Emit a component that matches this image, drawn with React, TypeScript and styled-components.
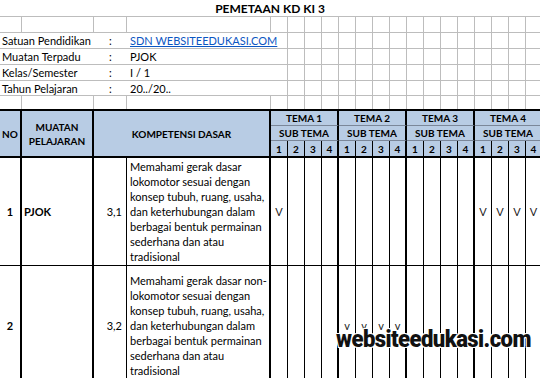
import React from 'react';
import styled, { createGlobalStyle } from 'styled-components';

const COLS = '22px 72px 33px 144px repeat(16, 17px)';
const GRID = '#bdbdbd';
const HEAD = '#b8cce4';

const info = [
  { label: 'Satuan Pendidikan', value: 'SDN WEBSITEEDUKASI.COM', link: true },
  { label: 'Muatan Terpadu', value: 'PJOK' },
  { label: 'Kelas/Semester', value: 'I / 1' },
  { label: 'Tahun Pelajaran', value: '20../20..' },
];

const tail = [
  'konsep tubuh, ruang, usaha,',
  'dan keterhubungan dalam',
  'berbagai bentuk permainan',
  'sederhana dan atau',
  'tradisional',
];

const rows = [
  {
    no: '1',
    subject: 'PJOK',
    kd: '3,1',
    lines: ['Memahami gerak dasar', 'lokomotor sesuai dengan', ...tail],
    checks: [0, 12, 13, 14, 15],
    mark: 'V',
    height: 108,
  },
  {
    no: '2',
    subject: '',
    kd: '3,2',
    lines: ['Memahami gerak dasar non-', 'lokomotor sesuai dengan', ...tail],
    checks: [4, 5, 6, 7],
    mark: 'v',
    height: 120,
  },
];

const subCols = Array.from({ length: 16 }, (_, i) => i);
const allCols = Array.from({ length: 20 }, (_, i) => i);

const GlobalStyle = createGlobalStyle`
  html, body {
    margin: 0;
    padding: 0;
    background: #fff;
  }
`;

const App: React.FC = () => {
  return (
    <>
      <GlobalStyle />
      <Sheet>
        <Title>PEMETAAN KD KI 3</Title>

        <TopGrid>
          {allCols.map((i) => (
            <GridCell key={'a' + i} />
          ))}
          {info.map((row) => (
            <React.Fragment key={row.label}>
              <Label>{row.label}</Label>
              <Colon>:</Colon>
              <Value $link={row.link}>{row.value}</Value>
              {subCols.map((i) => (
                <GridCell key={i} />
              ))}
            </React.Fragment>
          ))}
          {allCols.map((i) => (
            <GridCell key={'b' + i} $last />
          ))}
        </TopGrid>

        <Header>
          <HeadCell $rows={3} $right={2}>NO</HeadCell>
          <HeadCell $rows={3} $right={2}>
            MUATAN
            <br />
            PELAJARAN
          </HeadCell>
          <HeadCell $rows={3} $span={2} $right={2}>
            KOMPETENSI DASAR
          </HeadCell>
          {[1, 2, 3, 4].map((t) => (
            <HeadCell key={'t' + t} $span={4} $right={2} $bottom>
              TEMA {t}
            </HeadCell>
          ))}
          {[1, 2, 3, 4].map((t) => (
            <HeadCell key={'s' + t} $span={4} $right={2} $bottom>
              SUB TEMA
            </HeadCell>
          ))}
          {subCols.map((i) => (
            <HeadCell key={'n' + i} $right={i % 4 === 3 ? 2 : 1}>
              {(i % 4) + 1}
            </HeadCell>
          ))}
        </Header>

        {rows.map((row) => (
          <BodyRow key={row.no} $h={row.height}>
            <Cell $right={2} $align="center" $bold>
              {row.no}
            </Cell>
            <Cell $right={2} $align="flex-start" $bold $pad={2}>
              {row.subject}
            </Cell>
            <Cell $right={1} $align="flex-end" $pad={4}>
              {row.kd}
            </Cell>
            <KdText>
              {row.lines.map((l) => (
                <span key={l}>{l}</span>
              ))}
            </KdText>
            {subCols.map((i) => (
              <Cell key={i} $right={i % 4 === 3 ? 2 : 1} $align="center">
                {row.checks.includes(i) ? <Mark>{row.mark}</Mark> : null}
              </Cell>
            ))}
          </BodyRow>
        ))}

        <Watermark>websiteedukasi.com</Watermark>
      </Sheet>
    </>
  );
};

export default App;

const Sheet = styled.div`
  position: relative;
  width: 540px;
  height: 378px;
  overflow: hidden;
  background: #fff;
  color: #000;
  font-family: Lato, 'Liberation Sans', sans-serif;
  font-size: 11px;
`;

const Title = styled.div`
  height: 17px;
  box-sizing: border-box;
  border-bottom: 1px solid ${GRID};
  display: flex;
  align-items: center;
  justify-content: center;
  font-weight: 700;
  font-size: 12px;
`;

const TopGrid = styled.div`
  display: grid;
  grid-template-columns: ${COLS};
  grid-template-rows: 16px 16px 16px 16px 15px 13px;
`;

const GridCell = styled.div<{ $last?: boolean }>`
  box-sizing: border-box;
  border-right: 1px solid ${GRID};
  border-bottom: ${(p) => (p.$last ? 'none' : `1px solid ${GRID}`)};
`;

const Label = styled.div`
  grid-column: span 2;
  box-sizing: border-box;
  border-bottom: 1px solid ${GRID};
  padding-left: 2px;
  display: flex;
  align-items: center;
  white-space: nowrap;
`;

const Colon = styled.div`
  box-sizing: border-box;
  border-bottom: 1px solid ${GRID};
  display: flex;
  align-items: center;
  justify-content: center;
`;

const Value = styled.div<{ $link?: boolean }>`
  box-sizing: border-box;
  border-bottom: 1px solid ${GRID};
  padding-left: 3px;
  display: flex;
  align-items: center;
  white-space: nowrap;
  color: ${(p) => (p.$link ? '#0b56c2' : '#000')};
  text-decoration: ${(p) => (p.$link ? 'underline' : 'none')};
`;

const Header = styled.div`
  display: grid;
  grid-template-columns: ${COLS};
  grid-template-rows: 15px 15px 15px;
  border-top: 2px solid #000;
  border-bottom: 2px solid #000;
  background: ${HEAD};
  font-weight: 700;
  font-size: 10px;
`;

const HeadCell = styled.div<{
  $span?: number;
  $rows?: number;
  $right?: number;
  $bottom?: boolean;
}>`
  grid-column: span ${(p) => p.$span ?? 1};
  grid-row: span ${(p) => p.$rows ?? 1};
  box-sizing: border-box;
  border-right: ${(p) => p.$right ?? 1}px solid #000;
  border-bottom: ${(p) => (p.$bottom ? '1px solid #7b8799' : 'none')};
  display: flex;
  align-items: center;
  justify-content: center;
  text-align: center;
  line-height: 14px;
  white-space: nowrap;
`;

const BodyRow = styled.div<{ $h: number }>`
  display: grid;
  grid-template-columns: ${COLS};
  height: ${(p) => p.$h}px;
  box-sizing: border-box;
  border-bottom: 1px solid #000;
`;

const Cell = styled.div<{
  $right: number;
  $align: string;
  $bold?: boolean;
  $pad?: number;
}>`
  box-sizing: border-box;
  border-right: ${(p) => p.$right}px solid #000;
  display: flex;
  align-items: center;
  justify-content: ${(p) => p.$align};
  padding: 0 ${(p) => p.$pad ?? 0}px;
  font-weight: ${(p) => (p.$bold ? 700 : 400)};
`;

const KdText = styled.div`
  box-sizing: border-box;
  border-right: 2px solid #000;
  padding-left: 3px;
  display: flex;
  flex-direction: column;
  justify-content: center;
  line-height: 15px;
  white-space: nowrap;
`;

const Mark = styled.span`
  color: #222;
  font-size: 11px;
`;

const Watermark = styled.div`
  position: absolute;
  left: 336px;
  top: 327px;
  font-family: Roboto, 'Liberation Sans', sans-serif;
  font-weight: 900;
  font-size: 23px;
  line-height: 26px;
  letter-spacing: -0.6px;
  color: #111;
  transform: scaleX(0.96);
  transform-origin: left center;
  text-shadow:
    -1px -1px 0 #fff,
    1px -1px 0 #fff,
    -1px 1px 0 #fff,
    1px 1px 0 #fff;
`;
